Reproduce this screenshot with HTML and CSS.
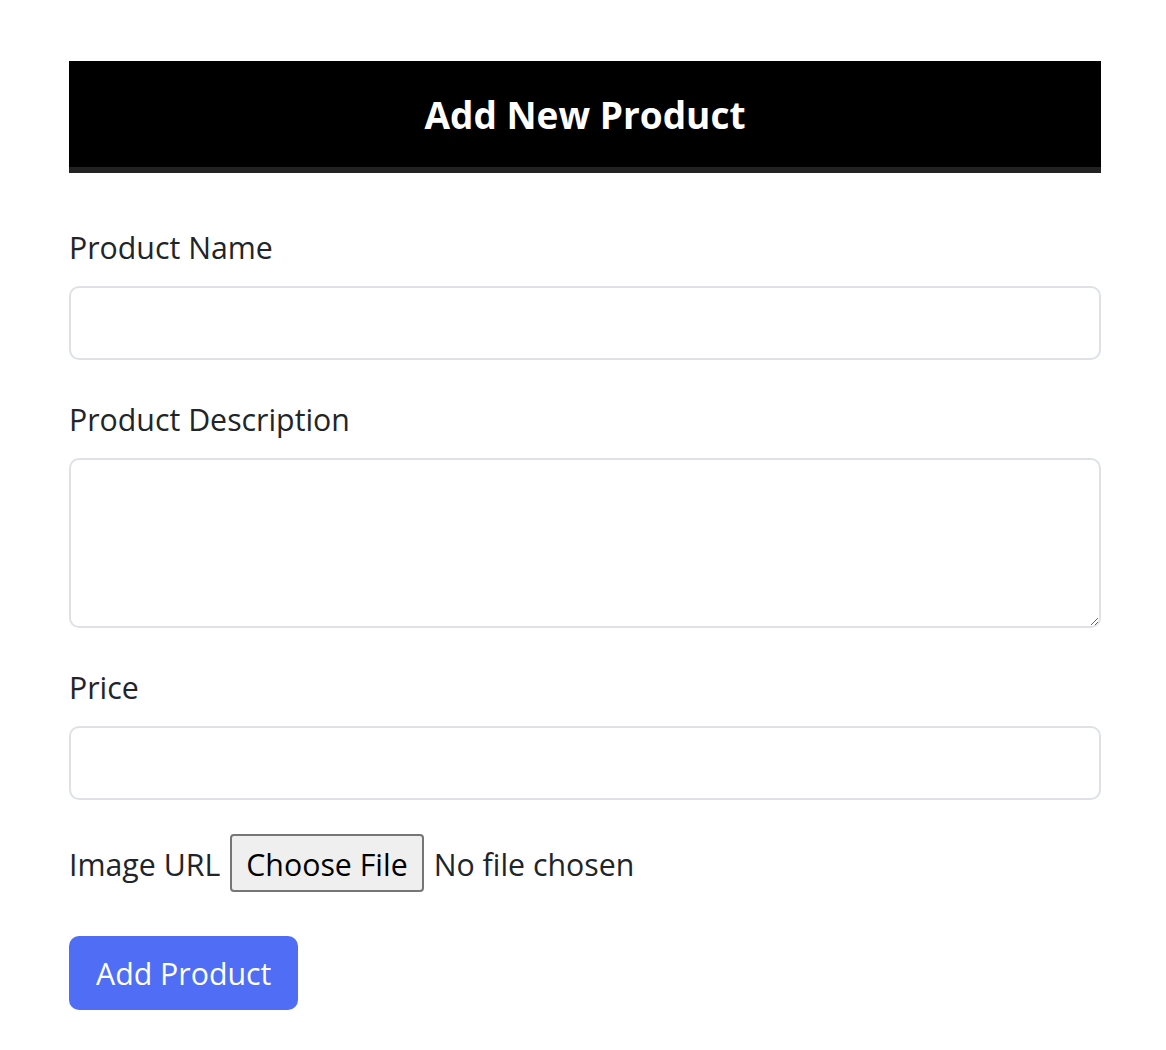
FILE: index.html
```html
<!DOCTYPE html>
<html>
<head>
<meta charset="utf-8">
<title>Add New Product</title>
<link rel="stylesheet" href="styles.css">
</head>
<body>
<div class="page">
  <header class="banner">
    <h2 class="banner-title">Add New Product</h2>
  </header>
  <form class="product-form">
    <div class="field">
      <label class="field-label" for="name">Product Name</label>
      <input class="field-input" id="name" type="text">
    </div>
    <div class="field">
      <label class="field-label" for="desc">Product Description</label>
      <textarea class="field-input field-area" id="desc"></textarea>
    </div>
    <div class="field">
      <label class="field-label" for="price">Price</label>
      <input class="field-input" id="price" type="text">
    </div>
    <div class="file-row">
      <label class="file-label" for="img">Image URL</label>
      <input class="file-input" id="img" type="file">
    </div>
    <button class="submit-btn" type="button">Add Product</button>
  </form>
</div>
</body>
</html>
```

FILE: styles.css
```css
html, body {
  margin: 0;
  padding: 0;
  background: #fff;
}
body {
  font-family: "Open Sans", "Noto Sans", sans-serif;
  color: #212529;
}
.page {
  padding: 61px 65px 0 69px;
}
.banner {
  height: 106px;
  background: #000;
  border-bottom: 6px solid #222;
  display: flex;
  align-items: center;
  justify-content: center;
}
.banner-title {
  margin: 0;
  color: #fff;
  font-size: 37px;
  font-weight: 700;
  line-height: 1;
}
.product-form {
  padding-top: 53px;
}
.field {
  display: flex;
  flex-direction: column;
  margin-bottom: 38px;
}
.field-label {
  font-size: 30.3px;
  line-height: 44px;
  margin-bottom: 16px;
}
.field-input {
  box-sizing: border-box;
  height: 74px;
  border: 2px solid #dee2e6;
  border-radius: 10px;
  font: inherit;
  font-size: 30px;
  padding: 8px 20px;
  background: #fff;
}
.field-area {
  height: 170px;
  resize: vertical;
}
.file-row {
  display: flex;
  align-items: center;
  gap: 10px;
  margin-top: -4px;
  height: 58px;
}
.file-label {
  font-size: 30.3px;
  line-height: 58px;
  padding-top: 4px;
}
.file-input {
  font-family: "Open Sans", "Noto Sans", sans-serif;
  font-size: 30.3px;
  line-height: 58px;
  height: 58px;
  padding: 0;
  color: #212529;
}
.file-input::file-selector-button {
  font: inherit;
  height: 58px;
  padding: 0 14px;
  margin-right: 10px;
  background: #efefef;
  border: 2px solid #767676;
  border-radius: 4px;
  color: #000;
}
.submit-btn {
  display: block;
  margin-top: 44px;
  height: 74px;
  padding: 0 27px;
  border: none;
  border-radius: 10px;
  background: #4f6ef5;
  color: #fff;
  font-family: "Open Sans", "Noto Sans", sans-serif;
  font-size: 30.3px;
}
```
